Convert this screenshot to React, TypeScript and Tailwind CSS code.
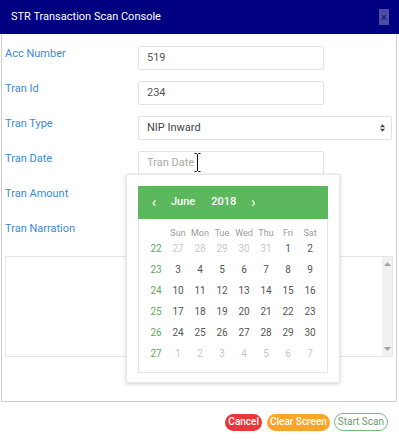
import React from 'react'

const weeks: { wk: number; days: { d: number; muted: boolean }[] }[] = [
  { wk: 22, days: [27, 28, 29, 30, 31, 1, 2].map((d, i) => ({ d, muted: i < 5 })) },
  { wk: 23, days: [3, 4, 5, 6, 7, 8, 9].map((d) => ({ d, muted: false })) },
  { wk: 24, days: [10, 11, 12, 13, 14, 15, 16].map((d) => ({ d, muted: false })) },
  { wk: 25, days: [17, 18, 19, 20, 21, 22, 23].map((d) => ({ d, muted: false })) },
  { wk: 26, days: [24, 25, 26, 27, 28, 29, 30].map((d) => ({ d, muted: false })) },
  { wk: 27, days: [1, 2, 3, 4, 5, 6, 7].map((d) => ({ d, muted: true })) },
]

const dayNames = ['Sun', 'Mon', 'Tue', 'Wed', 'Thu', 'Fri', 'Sat']

function Label({ children }: { children: React.ReactNode }) {
  return <div className="w-[133px] shrink-0 text-[11px] leading-[14px] text-[#3a8ad6] pt-[1px]">{children}</div>
}

function Calendar() {
  return (
    <div className="absolute left-[124px] top-[140px] w-[214px] h-[209px] bg-white border border-[#e8e8e8] shadow-[0_1px_4px_rgba(0,0,0,0.18)] p-[11px]">
      <div className="h-[33px] bg-[#5cb85c] flex items-center text-white text-[11px] font-medium">
        <span className="w-[32px] text-center text-[14px] leading-none pb-[2px]">‹</span>
        <span className="ml-[1px]">June</span>
        <span className="ml-[16px]">2018</span>
        <span className="ml-[15px] text-[14px] leading-none pb-[2px]">›</span>
      </div>
      <div className="border border-t-0 border-[#e6e6e6] h-[154px] pl-[6px] pt-[8px]">
        <div className="grid grid-cols-[22px_repeat(7,22px)] text-[9px] leading-[12px] text-[#9a9a9a] text-center h-[12px]">
          <span />
          {dayNames.map((n) => (
            <span key={n}>{n}</span>
          ))}
        </div>
        {weeks.map((w) => (
          <div key={w.wk} className="grid grid-cols-[22px_repeat(7,22px)] text-[10px] h-[21px] leading-[20px] text-center">
            <span className="text-[#5cab5c]">{w.wk}</span>
            {w.days.map((x, i) => (
              <span key={i} className={x.muted ? 'text-[#c8c8c8]' : 'text-[#555]'}>
                {x.d}
              </span>
            ))}
          </div>
        ))}
      </div>
    </div>
  )
}

export default function App() {
  return (
    <div className="w-[399px] h-[440px] bg-white relative font-['Roboto',sans-serif]">
      {/* Header */}
      <div className="h-[34px] bg-[#000080] flex items-center justify-between pl-[11px] pr-[10px]">
        <span className="text-white text-[11px]">STR Transaction Scan Console</span>
        <span className="w-[10px] h-[16px] bg-[#4d4da6] flex items-center justify-center text-[#20207a] text-[11px] font-bold leading-none">
          ×
        </span>
      </div>

      {/* Body */}
      <div className="relative mx-[1px] mr-[2px] h-[368px] border border-t-0 border-[#cfcfcf] pl-[3px] pr-[3px] pt-[12px]">
        <div className="flex h-[35px]">
          <Label>Acc Number</Label>
          <div className="w-[186px] h-[24px] border border-[#e3e3e3] rounded-[2px] text-[11px] text-[#555] pl-[8px] flex items-center">519</div>
        </div>
        <div className="flex h-[35px]">
          <Label>Tran Id</Label>
          <div className="w-[186px] h-[24px] border border-[#e3e3e3] rounded-[2px] text-[11px] text-[#555] pl-[8px] flex items-center">234</div>
        </div>
        <div className="flex h-[35px]">
          <Label>Tran Type</Label>
          <div className="w-[254px] h-[24px] border border-[#e3e3e3] rounded-[2px] text-[11px] text-[#444] pl-[8px] pr-[6px] flex items-center justify-between">
            <span>NIP Inward</span>
            <svg width="5" height="8" viewBox="0 0 6 9">
              <path d="M3 0 L6 3.5 H0 Z M3 9 L0 5.5 H6 Z" fill="#444" />
            </svg>
          </div>
        </div>
        <div className="flex h-[35px]">
          <Label>Tran Date</Label>
          <div className="relative w-[186px] h-[24px] border border-[#e3e3e3] rounded-[2px] text-[11px] text-[#aaa] pl-[8px] flex items-center">
            Tran Date
            <svg className="absolute left-[55px] top-[1px]" width="7" height="19" viewBox="0 0 7 19">
              <path d="M0.5 0.5 H2.5 L3.5 1.5 L4.5 0.5 H6.5 M3.5 1.5 V17.5 M0.5 18.5 H2.5 L3.5 17.5 L4.5 18.5 H6.5" stroke="#111" strokeWidth="1" fill="none" />
            </svg>
          </div>
        </div>
        <div className="flex h-[35px]">
          <Label>Tran Amount</Label>
          <div className="w-[186px] h-[24px] border border-[#e3e3e3] rounded-[2px]" />
        </div>
        <div className="flex h-[35px]">
          <Label>Tran Narration</Label>
        </div>
        <div className="flex h-[101px] border border-[#e6e6e6]">
          <div className="flex-1" />
          <div className="w-[10px] bg-[#f1f1f1] flex flex-col items-center justify-between py-[5px]">
            <svg width="7" height="4" viewBox="0 0 7 4">
              <path d="M3.5 0 L7 4 H0 Z" fill="#a3a3a3" />
            </svg>
            <svg width="7" height="4" viewBox="0 0 7 4">
              <path d="M0 0 H7 L3.5 4 Z" fill="#a3a3a3" />
            </svg>
          </div>
        </div>

        <Calendar />
      </div>

      {/* Footer */}
      <div className="flex justify-end items-center gap-[4px] pr-[11px] pt-[11px]">
        <button className="h-[17px] px-[3px] rounded-full bg-[#e8383b] text-white text-[10px] font-medium leading-none">Cancel</button>
        <button className="ml-[1px] h-[17px] px-[3px] rounded-full bg-[#fba42a] text-white text-[10px] font-medium leading-none">Clear Screen</button>
        <button className="h-[18px] px-[3px] rounded-full border border-[#74bd7c] text-[#6b9a70] text-[10px] leading-none">Start Scan</button>
      </div>
    </div>
  )
}
